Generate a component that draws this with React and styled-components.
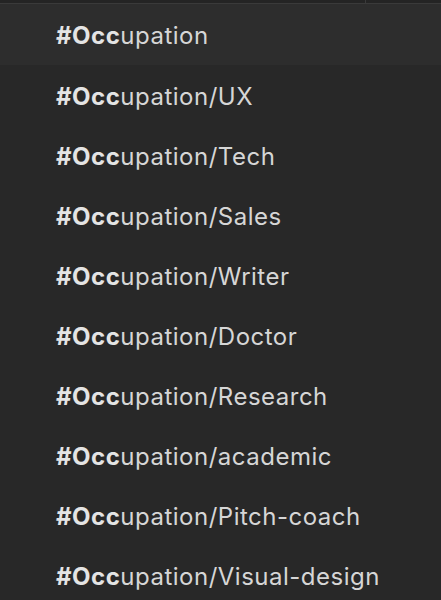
import styled, { createGlobalStyle } from "styled-components";

const GlobalStyle = createGlobalStyle`
  body {
    margin: 0;
    background: #282828;
    font-family: Inter, "Noto Sans", sans-serif;
  }
`;

const tags = [
  "",
  "/UX",
  "/Tech",
  "/Sales",
  "/Writer",
  "/Doctor",
  "/Research",
  "/academic",
  "/Pitch-coach",
  "/Visual-design",
];

export default function App() {
  return (
    <>
      <GlobalStyle />
      <Panel>
        <TopBar>
          <TopCell />
          <TopCell $narrow />
        </TopBar>
        <List>
          {tags.map((rest, i) => (
            <Row key={i} $active={i === 0}>
              <Tag>
                <b>#Occ</b>upation{rest}
              </Tag>
            </Row>
          ))}
        </List>
      </Panel>
    </>
  );
}

const Panel = styled.div`
  width: 441px;
  height: 600px;
  background: #282828;
  overflow: hidden;
`;

const TopBar = styled.div`
  height: 3px;
  display: flex;
  gap: 1px;
  background: #3a3a3a;
  border-bottom: 1px solid #3a3a3a;
`;

const TopCell = styled.div`
  flex: ${(p) => (p.$narrow ? "0 0 75px" : "1")};
  background: #242424;
`;

const List = styled.div`
  display: flex;
  flex-direction: column;
`;

const Row = styled.div`
  height: 60px;
  box-sizing: border-box;
  padding: 2px 0 0 56px;
  display: flex;
  align-items: center;
  background: ${(p) => (p.$active ? "#2d2d2d" : "transparent")};
  &:first-child {
    height: 61px;
  }
`;

const Tag = styled.span`
  color: #d6d6d6;
  font-size: 24px;
  letter-spacing: 0.5px;
  b {
    font-weight: 700;
    color: #e4e4e4;
  }
`;
